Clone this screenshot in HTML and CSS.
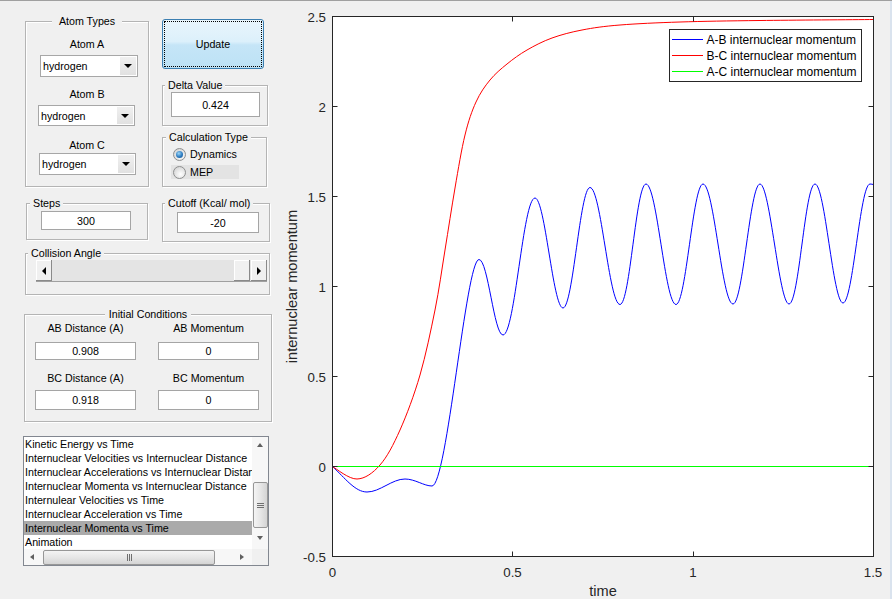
FILE: index.html
```html
<!DOCTYPE html>
<html>
<head>
<meta charset="utf-8">
<title>Atom Dynamics</title>
<link rel="stylesheet" href="styles.css">
</head>
<body>
<div class="app">
  <div class="left">
    <div class="row row1">
      <div class="panel atoms">
        <span class="ptitle center">Atom Types</span>
        <div class="lbl lblA">Atom A</div>
        <div class="select selA"><span class="sval">hydrogen</span><span class="sbtn"><i class="tri-d"></i></span></div>
        <div class="lbl lblB">Atom B</div>
        <div class="select selB"><span class="sval">hydrogen</span><span class="sbtn"><i class="tri-d"></i></span></div>
        <div class="lbl lblC">Atom C</div>
        <div class="select selC"><span class="sval">hydrogen</span><span class="sbtn"><i class="tri-d"></i></span></div>
      </div>
      <div class="col2">
        <div class="update"><div class="focus">Update</div></div>
        <div class="panel delta">
          <span class="ptitle">Delta Value</span>
          <div class="edit deltabox">0.424</div>
        </div>
        <div class="panel calc">
          <span class="ptitle t3">Calculation Type</span>
          <div class="radio r1"><span class="rcircle on"></span>Dynamics</div>
          <div class="radio r2"><span class="rcircle"></span>MEP</div>
        </div>
      </div>
    </div>

    <div class="row row2">
      <div class="panel steps">
        <span class="ptitle t3">Steps</span>
        <div class="edit stepsbox">300</div>
      </div>
      <div class="panel cutoff">
        <span class="ptitle">Cutoff (Kcal/ mol)</span>
        <div class="edit cutbox">-20</div>
      </div>
    </div>

    <div class="panel collision">
      <span class="ptitle">Collision Angle</span>
      <div class="slider">
        <div class="b3d"><i class="tri-l"></i></div>
        <div class="track"></div>
        <div class="b3d thumb3d"></div>
        <div class="b3d"><i class="tri-r"></i></div>
      </div>
    </div>

    <div class="panel init">
      <span class="ptitle center ic">Initial Conditions</span>
      <div class="ic-row ic-l1"><div class="iclbl">AB Distance (A)</div><div class="iclbl">AB Momentum</div></div>
      <div class="ic-row ic-i1"><div class="edit icin1">0.908</div><div class="edit icin1">0</div></div>
      <div class="ic-row ic-l2"><div class="iclbl">BC Distance (A)</div><div class="iclbl">BC Momentum</div></div>
      <div class="ic-row ic-i2"><div class="edit icin2">0.918</div><div class="edit icin2">0</div></div>
    </div>

    <div class="list">
      <div class="items">
        <div class="item">Kinetic Energy vs Time</div>
        <div class="item">Internuclear Velocities vs Internuclear Distance</div>
        <div class="item">Internuclear Accelerations vs Internuclear Distance</div>
        <div class="item">Internuclear Momenta vs Internuclear Distance</div>
        <div class="item">Internulear Velocities vs Time</div>
        <div class="item">Internuclear Acceleration vs Time</div>
        <div class="item sel">Internuclear Momenta vs Time</div>
        <div class="item">Animation</div>
      </div>
      <div class="vscroll">
        <div class="sarrow"><i class="st-u"></i></div>
        <div class="vthumb"><i class="vgrip"></i></div>
        <div class="sarrow down"><i class="st-d"></i></div>
      </div>
      <div class="hscroll">
        <div class="sarrow h"><i class="st-l"></i></div>
        <div class="hthumb"><i class="hgrip"></i></div>
        <div class="sarrow h right"><i class="st-r"></i></div>
      </div>
      <div class="corner"></div>
    </div>
  </div>

  <svg class="chart" width="610" height="598" viewBox="280 1 610 598" xmlns="http://www.w3.org/2000/svg">
    <rect x="332.5" y="16.5" width="541" height="540" fill="#ffffff"/>
    <path class="curve" stroke="#0000ff" d="M332.5,466.5 C345,478 355,492 367,492 C380,492 392,479 405,479 C415,479 424,486 432,486 C447,486 466,259.5 479,259.5 C488,259.5 494,335 503,335 C515,335 523,198 535,198 C545,198 553,308 563,308 C573,308 580,187.5 590,187.5 C601,187.5 609,304.5 620,304.5 C630,304.5 636,184 646,184 C657,184 665,304.5 676,304.5 C686,304.5 693,184 703,184 C714,184 722,304 733,304 C743,304 750,184 760,184 C770,184 779,304 789,304 C799,304 805,184 815,184 C825,184 833,303 843,303 C853,303 860,184 870,184 C871.5,184 872.5,184.3 873.5,184.6"/>
    <path class="curve" stroke="#ff0000" d="M332.5,466.5 C336.2,468.6 349,479.3 357,479 C365,478.75 372.8,473.2 380,465 C387.2,456.8 393.3,445 400,430 C406.7,415 414.2,395 420,375 C425.8,355 430.8,330.8 435,310 C439.2,289.2 441.7,270.3 445,250 C448.3,229.7 451.7,207.2 455,188 C458.3,168.8 461.5,149.3 465,135 C468.5,120.7 471.8,111.2 476,102 C480.2,92.8 484.8,86.3 490,80 C495.2,73.7 500.8,69 507,64 C513.2,59 519.5,54.3 527,50 C534.5,45.7 542.8,41.3 552,38 C561.2,34.7 570.7,32.2 582,30 C593.3,27.8 603.7,26.3 620,25 C636.3,23.7 656.7,22.75 680,22 C703.3,21.25 727.8,20.9 760,20.5 C792.3,20.1 854.6,19.7 873.5,19.5"/>
    <path class="curve" stroke="#00ff00" d="M332.5,466.5 H873.5"/>
    <path class="ticks" d="M332.5,106.5h5 M332.5,196.5h5 M332.5,286.5h5 M332.5,376.5h5 M332.5,466.5h5 M873.5,106.5h-5 M873.5,196.5h-5 M873.5,286.5h-5 M873.5,376.5h-5 M873.5,466.5h-5 M512.5,556.5v-5 M693.5,556.5v-5 M512.5,16.5v5 M693.5,16.5v5"/>
    <rect class="frame" x="332.5" y="16.5" width="541" height="540"/>
    <g class="tick">
      <text x="326" y="21.5">2.5</text>
      <text x="326" y="111.5">2</text>
      <text x="326" y="201.5">1.5</text>
      <text x="326" y="291.5">1</text>
      <text x="326" y="381.5">0.5</text>
      <text x="326" y="471.5">0</text>
      <text x="326" y="562">-0.5</text>
    </g>
    <g class="tick xt">
      <text x="332.5" y="577">0</text>
      <text x="512.5" y="577">0.5</text>
      <text x="693" y="577">1</text>
      <text x="873" y="577">1.5</text>
    </g>
    <text class="axlabel" x="603" y="596">time</text>
    <text class="axlabel" transform="translate(297,286.5) rotate(-90)">internuclear momentum</text>
    <rect class="legend" x="669.5" y="29.5" width="192" height="52"/>
    <path stroke="#0000ff" d="M672,39.5H703"/>
    <path stroke="#ff0000" d="M672,55.5H703"/>
    <path stroke="#00ff00" d="M672,71.5H703"/>
    <g class="legtext">
      <text x="706.5" y="44">A-B internuclear momentum</text>
      <text x="706.5" y="60">B-C internuclear momentum</text>
      <text x="706.5" y="76">A-C internuclear momentum</text>
    </g>
  </svg>
  <div class="edge"></div>
</div>
</body>
</html>
```
FILE: styles.css
```css
* { box-sizing: border-box; }
body {
  margin: 0;
  background: #f0f0f0;
  font-family: "Liberation Sans", Arial, sans-serif;
  font-size: 10.7px;
  color: #000;
}
.app {
  display: flex;
  width: 892px;
  height: 599px;
  border-top: 1px solid #a0a0a0;
  overflow: hidden;
}
.left { width: 280px; flex: none; }
.chart { display: block; flex: none; width: 610px; height: 598px; }
.edge { flex: none; width: 2px; background: #dae3ee; }

.row { display: flex; align-items: flex-start; }
.row1 { margin-top: 18px; }
.row2 { margin-top: 16px; }

/* etched group panels */
.panel {
  position: relative;
  border: 1px solid #b4b4b4;
  box-shadow: inset 1px 1px 0 #fff, 1px 1px 0 #fff;
}
.ptitle {
  position: absolute;
  top: -7px;
  left: 2px;
  line-height: 13px;
  padding: 0 3px;
  background: #f0f0f0;
  white-space: nowrap;
}
.ptitle.t3 { left: 3px; }
.ptitle.center { left: 0; right: 0; margin: 0 auto; width: max-content; padding: 0 7px; }
.ptitle.ic { padding: 0 4px; }

/* atom types */
.atoms { margin: 2px 0 0 25px; width: 124px; height: 166px; }
.lbl { height: 13px; line-height: 13px; text-align: center; }
.lblA { margin-top: 16px; }
.lblB { margin-top: 11px; }
.lblC { margin-top: 13px; }
.select {
  display: flex;
  align-items: center;
  height: 22px;
  border: 1px solid #a7a7a7;
  background: #fff;
}
.selA { margin: 4px 0 0 14px; width: 98px; }
.selB { margin: 4px 0 0 12px; width: 97px; height: 21px; }
.selC { margin: 1px 0 0 13px; width: 97px; }
.sval { flex: 1; padding-left: 2px; }
.sbtn {
  width: 16px;
  align-self: stretch;
  margin: 1px;
  background: linear-gradient(#f0f0f0, #e1e1e1);
  display: flex;
  align-items: center;
  justify-content: center;
}
.tri-d {
  width: 0; height: 0;
  border-left: 4px solid transparent;
  border-right: 4px solid transparent;
  border-top: 4px solid #000;
}

/* right column */
.col2 { margin-left: 13px; width: 108px; }
.update {
  width: 102px;
  height: 50px;
  border: 1px solid #3c7fb1;
  border-radius: 3px;
  padding: 1px;
  background: linear-gradient(#e9f5fc, #dcf0fb 45%, #c5e5f7 52%, #bde2f5);
}
.focus {
  height: 100%;
  border: 1px dotted #000;
  display: flex;
  align-items: center;
  justify-content: center;
}
.edit {
  background: #fff;
  border: 1px solid #a5a5a5;
  display: flex;
  align-items: center;
  justify-content: center;
}
.delta { margin-top: 16px; width: 106px; height: 41px; }
.deltabox { margin: 6px 0 0 8px; width: 89px; height: 25px; }
.calc { margin-top: 11px; width: 105px; height: 50px; }
.radio {
  display: flex;
  align-items: center;
  gap: 4px;
  margin-left: 8px;
  padding-left: 2px;
  width: 68px;
  height: 14px;
}
.r1 { margin-top: 9px; }
.r2 { margin-top: 4px; background: #e3e3e3; }
.rcircle {
  width: 13px; height: 13px;
  flex: none;
  border-radius: 50%;
  border: 1px solid #8e8f8f;
  background: radial-gradient(circle at 60% 65%, #ffffff, #d8d8d8 75%);
  display: flex;
  align-items: center;
  justify-content: center;
}
.rcircle.on::after {
  content: "";
  width: 7px; height: 7px;
  border-radius: 50%;
  background: radial-gradient(circle at 40% 35%, #9cd6f7, #2d7bc0 55%, #174f86);
}

/* steps / cutoff */
.steps { margin-left: 26px; width: 122px; height: 37px; }
.stepsbox { margin: 7px 0 0 14px; width: 90px; height: 19px; }
.cutoff { margin-left: 14px; width: 108px; height: 39px; }
.cutbox { margin: 8px 0 0 14px; width: 82px; height: 21px; }

/* collision angle */
.collision { margin: 11px 0 0 25px; width: 245px; height: 42px; }
.slider {
  display: flex;
  margin: 6px 0 0 10px;
  width: 231px;
  height: 22px;
  background: #e4e4e4;
  border-bottom: 1px solid #a0a0a0;
}
.track { flex: 1; }
.b3d {
  width: 16px;
  flex: none;
  background: #f0f0f0;
  box-shadow: inset -1px -1px 0 #8a8a8a, inset 1px 1px 0 #fff;
  display: flex;
  align-items: center;
  justify-content: center;
}
.thumb3d { margin-right: 1px; }
.tri-l, .tri-r { width: 0; height: 0; border-top: 4px solid transparent; border-bottom: 4px solid transparent; }
.tri-l { border-right: 4px solid #000; }
.tri-r { border-left: 4px solid #000; }

/* initial conditions */
.init { margin: 19px 0 0 24px; width: 248px; height: 108px; }
.ic-row { display: flex; gap: 22px; padding-left: 10px; }
.iclbl { width: 101px; height: 13px; line-height: 13px; text-align: center; }
.ic-l1 { margin-top: 7px; }
.ic-i1 { margin-top: 7px; }
.ic-l2 { margin-top: 12px; }
.ic-i2 { margin-top: 5px; }
.icin1 { width: 101px; height: 18px; }
.icin2 { width: 101px; height: 20px; }

/* listbox */
.list {
  margin: 14px 0 0 23px;
  width: 246px;
  height: 130px;
  border: 1px solid #828790;
  background: #fff;
  display: grid;
  grid-template-columns: 228px 16px;
  grid-template-rows: 112px 16px;
}
.items { overflow: hidden; white-space: nowrap; }
.item { height: 14px; line-height: 14px; padding-left: 1px; }
.item.sel { background: #aaaaaa; }
.vscroll { background: #f7f7f7; display: flex; flex-direction: column; align-items: center; }
.hscroll { background: #f7f7f7; display: flex; align-items: center; }
.corner { background: #f0f0f0; }
.sarrow { width: 16px; height: 16px; flex: none; display: flex; align-items: center; justify-content: center; }
.sarrow.down { margin-top: 2px; }
.sarrow.right { margin-left: 19px; }
.vthumb {
  margin-top: 29px;
  width: 15px;
  height: 46px;
  border: 1px solid #979797;
  border-radius: 2px;
  background: linear-gradient(90deg, #f4f4f4, #e6e6e6 50%, #d4d4d4);
  display: flex;
  align-items: center;
  justify-content: center;
}
.hthumb {
  margin-left: 3px;
  width: 172px;
  height: 15px;
  border: 1px solid #979797;
  border-radius: 2px;
  background: linear-gradient(#f4f4f4, #e6e6e6 50%, #d4d4d4);
  display: flex;
  align-items: center;
  justify-content: center;
}
.vgrip { width: 7px; height: 5px; background: repeating-linear-gradient(#6f6f6f 0 1px, transparent 1px 2px); }
.hgrip { width: 5px; height: 7px; background: repeating-linear-gradient(90deg, #6f6f6f 0 1px, transparent 1px 2px); }
.st-u, .st-d { width: 0; height: 0; border-left: 3.5px solid transparent; border-right: 3.5px solid transparent; }
.st-u { border-bottom: 4px solid #606060; }
.st-d { border-top: 4px solid #606060; }
.st-l, .st-r { width: 0; height: 0; border-top: 3.5px solid transparent; border-bottom: 3.5px solid transparent; }
.st-l { border-right: 4px solid #606060; }
.st-r { border-left: 4px solid #606060; }

/* chart */
.chart text { font-family: "Liberation Sans", Arial, sans-serif; }
.curve { fill: none; stroke-width: 1; }
.chart path { fill: none; stroke-width: 1; }
.ticks { stroke: #262626; }
.frame { fill: none; stroke: #262626; stroke-width: 1; }
.tick text { font-size: 13.3px; fill: #262626; text-anchor: end; }
.xt text { text-anchor: middle; }
.axlabel { font-size: 14.6px; fill: #262626; text-anchor: middle; }
.legend { fill: #fff; stroke: #262626; stroke-width: 1; }
.legtext text { font-size: 12px; fill: #000; }
```
